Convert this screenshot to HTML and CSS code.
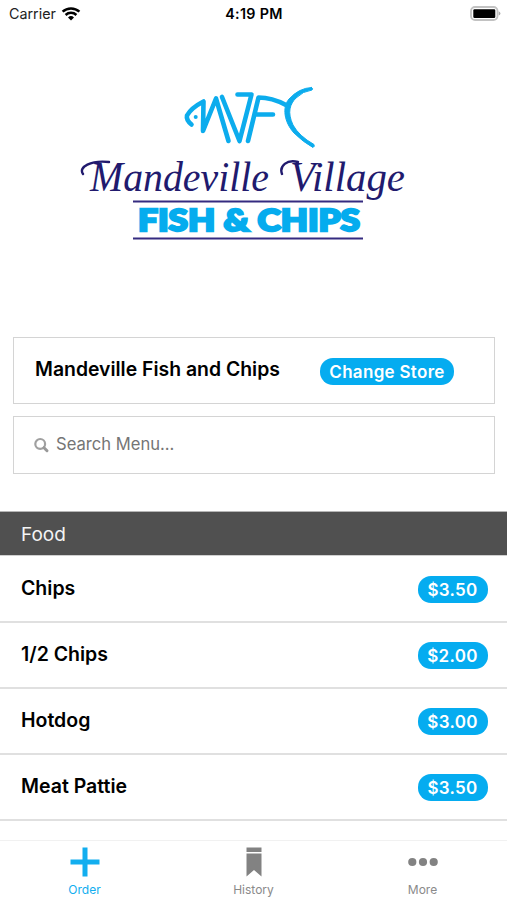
FILE: index.html
```html
<!DOCTYPE html>
<html lang="en">
<head>
    <meta charset="UTF-8">
    <meta name="viewport" content="width=device-width, initial-scale=1.0">
    <title>Mandeville Village Fish &amp; Chips</title>
    <link rel="stylesheet" href="styles.css">
</head>
<body>

    <div class="app">
        <header class="status-bar">
            <div class="carrier">
                <span>Carrier</span>
                <svg class="wifi" width="20" height="16" viewBox="0 0 20 16">
                    <path d="M1.600 5.700a12.300 12.300 0 0 1 16.800 0M4.600 9a7.900 7.900 0 0 1 10.800 0" fill="none" stroke="#000" stroke-width="2.500"/>
                    <path d="M7 11.400a4.600 4.600 0 0 1 6 0L10 14.500z"/>
                </svg>
            </div>
            <span class="time">4:19 PM</span>
            <svg class="battery" width="31" height="15" viewBox="0 0 31 15">
                <rect x="1" y="1" width="26.500" height="13" rx="4" fill="#fff" stroke="#c2c2c2" stroke-width="1.800"/>
                <rect x="3.300" y="3.200" width="22" height="8.800" rx="1.200"/>
                <path d="M28.700 5.200q1.700.7 1.700 2.200t-1.700 2.200z" fill="#aaa"/>
            </svg>
        </header>

        <div class="logo">
            <svg width="340" height="166" viewBox="75 80 340 166">
                <g class="fish">
                    <path d="M191.500 124.500Q186 120 187 115.500Q191 108 203.500 101.500L203 131L216 98.500L228.500 141"/>
                    <path d="M222 97L239.500 141L251.500 94.500H237.500"/>
                    <path d="M248 141L258.500 97.500Q272 97.500 286 105M257 114.500H273"/>
                    <path class="tail" d="M311.500 87.500Q299 88 289 99C282 107 284 122 294 133Q303 142 313 147.500Q315 146.500 314 144.500Q299 136 293 125C287 112 290 104 296 98Q303 91 312 90Q313.500 88.500 311.500 87.500Z"/>
                    <circle class="eye" cx="195.700" cy="117" r="2"/>
                </g>
                <text class="script" x="90" y="191" textLength="179" lengthAdjust="spacingAndGlyphs">Mandeville</text>
                <text class="script" x="290" y="191" textLength="115" lengthAdjust="spacingAndGlyphs">Village</text>
                <path class="swash" d="M83 174C78 167 91 160 109 162M282 174C279 166 287 159 298 162"/>
                <path class="rule" d="M133 201.500H363M133 238.500H363"/>
                <text class="block" x="138" y="230.500" textLength="222" lengthAdjust="spacingAndGlyphs">FISH &amp; CHIPS</text>
            </svg>
        </div>

        <div class="store box">
            <span class="store-name">Mandeville Fish and Chips</span>
            <button class="pill change">Change Store</button>
        </div>
        <div class="search box">
            <svg width="16" height="16" viewBox="0 0 16 16">
                <circle cx="6.200" cy="6.900" r="4.900" fill="none" stroke="#a0a0a0" stroke-width="2.200"/>
                <path d="M10 10.700l3 3" stroke="#999" stroke-width="3" stroke-linecap="round"/>
            </svg>
            <span>Search Menu...</span>
        </div>

        <main class="menu">
            <h2 class="category">Food</h2>
            <div class="item"><span>Chips</span><span class="pill">$3.50</span></div>
            <div class="item"><span>1/2 Chips</span><span class="pill">$2.00</span></div>
            <div class="item"><span>Hotdog</span><span class="pill">$3.00</span></div>
            <div class="item"><span>Meat Pattie</span><span class="pill">$3.50</span></div>
        </main>

        <nav class="tabs">
            <div class="tab active">
                <svg width="32" height="32" viewBox="0 0 32 32"><path d="M13.500 1.500h5v12h12v5h-12v12h-5v-12h-12v-5h12z"/></svg>
                <span>Order</span>
            </div>
            <div class="tab">
                <svg width="32" height="32" viewBox="0 0 32 32"><path d="M8.500 1.500h15v4.500h-15zM8.500 7.500h15v23L16 24l-7.500 6.500z"/></svg>
                <span>History</span>
            </div>
            <div class="tab">
                <svg width="32" height="32" viewBox="0 0 32 32"><circle cx="5.300" cy="16" r="4.100"/><circle cx="16" cy="16" r="4.100"/><circle cx="26.700" cy="16" r="4.100"/></svg>
                <span>More</span>
            </div>
        </nav>
    </div>

</body>
</html>
```
FILE: styles.css
```css
body {
    font-family: Inter, "Liberation Sans", sans-serif;
    margin: 0;
    background-color: #fff;
    color: #000;
}
.app {
    display: flex;
    flex-direction: column;
    height: 900px;
    overflow: hidden;
}
.status-bar {
    display: grid;
    grid-template-columns: 1fr auto 1fr;
    align-items: center;
    height: 27px;
    padding: 0 6px 0 9px;
    font-size: 14.3px;
}
.carrier {
    display: flex;
    align-items: center;
    gap: 5px;
    color: #222;
}
.time {
    font-weight: 600;
    letter-spacing: 0.3px;
    margin-right: 2px;
}
.battery {
    justify-self: end;
}
.logo {
    height: 257px;
    padding: 53px 0 0 75px;
    box-sizing: border-box;
}
.logo svg {
    overflow: visible;
}
.fish {
    fill: none;
    stroke: #0caced;
    stroke-width: 4.6;
    stroke-linecap: round;
    stroke-linejoin: round;
}
.fish .tail {
    fill: #0caced;
    stroke-width: 1;
}
.fish .eye {
    fill: #0caced;
    stroke: none;
}
.script {
    font: italic 43px "Liberation Serif", serif;
    fill: #211a6e;
}
.swash {
    fill: none;
    stroke: #211a6e;
    stroke-width: 2.4;
    stroke-linecap: round;
}
.block {
    font: 900 30px Lato, sans-serif;
    fill: #05acee;
    stroke: #05acee;
    stroke-width: 2.4;
}
.rule {
    stroke: #352b80;
    stroke-width: 2;
}
.box {
    display: flex;
    align-items: center;
    margin: 0 12px 0 13px;
    border: 1px solid #d4d4d4;
    box-sizing: border-box;
}
.store {
    height: 67px;
    margin-top: 53px;
    padding: 0 40px 0 21px;
    justify-content: space-between;
    font-size: 19.4px;
    font-weight: 600;
}
.store-name {
    padding-bottom: 3px;
}
.pill {
    height: 27px;
    border: none;
    border-radius: 13px;
    background-color: #05acf0;
    color: #fff;
    font: 600 17px/28px Inter, sans-serif;
    text-align: center;
    padding: 0;
    width: 70px;
    letter-spacing: 0.3px;
}
.change {
    width: 134px;
    margin-top: 1px;
}
.search {
    height: 58px;
    margin-top: 12px;
    padding: 0 20px;
    gap: 6px;
    font-size: 16.6px;
    color: #757575;
}
.search span {
    padding-bottom: 3px;
}
.menu {
    margin-top: 37px;
}
.category {
    margin: 0;
    height: 45px;
    padding-left: 21px;
    background-color: #505050;
    background-clip: padding-box;
    border-top: 1px solid #b5b5b5;
    border-bottom: 1px solid #d0d0d0;
    box-sizing: border-box;
    color: #f4f4f4;
    font-size: 19px;
    font-weight: 400;
    line-height: 45px;
}
.item {
    display: flex;
    justify-content: space-between;
    align-items: center;
    height: 66px;
    padding: 0 19.5px 0 21px;
    border-bottom: 2px solid #e0e0e0;
    box-sizing: border-box;
    font-size: 19.5px;
    font-weight: 600;
}
.item:first-of-type {
    height: 67px;
    padding-top: 1px;
}
.item span:first-child {
    padding-bottom: 3px;
}
.tabs {
    display: flex;
    margin-top: auto;
    height: 60px;
    border-top: 1px solid #f1f1f1;
    box-sizing: border-box;
}
.tab {
    display: flex;
    flex: 1;
    flex-direction: column;
    align-items: center;
    padding-top: 5px;
    font-size: 12px;
    color: #8a8a8a;
    fill: #828282;
}
.tab span {
    margin-top: 4px;
}
.tab.active {
    color: #12aeef;
    fill: #12aeef;
}
```
